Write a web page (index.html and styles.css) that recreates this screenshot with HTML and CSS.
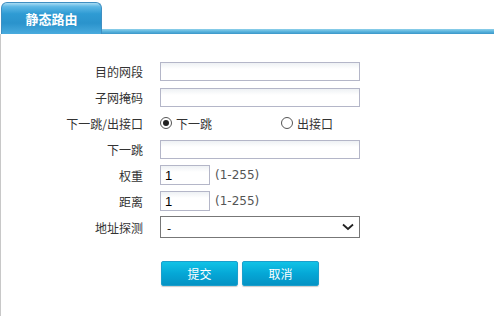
FILE: index.html
```html
<!DOCTYPE html>
<html lang="zh-CN">
<head>
	<meta charset="UTF-8">
	<title>静态路由</title>
	<link rel="stylesheet" href="styles.css">
</head>
<body>
	<div class="head">
		<div class="tab">静态路由</div>
		<div class="line"></div>
	</div>
	<div class="main">
		<div class="form">
			<label class="lbl">目的网段</label>
			<div class="val"><input type="text" class="ipt"></div>

			<label class="lbl">子网掩码</label>
			<div class="val"><input type="text" class="ipt"></div>

			<label class="lbl">下一跳/出接口</label>
			<div class="val radios">
				<span class="rad"><i class="dot on"></i>下一跳</span>
				<span class="rad"><i class="dot"></i>出接口</span>
			</div>

			<label class="lbl">下一跳</label>
			<div class="val"><input type="text" class="ipt"></div>

			<label class="lbl">权重</label>
			<div class="val"><input type="text" class="ipt short" value="1"><span class="tip">(1-255)</span></div>

			<label class="lbl">距离</label>
			<div class="val"><input type="text" class="ipt short" value="1"><span class="tip">(1-255)</span></div>

			<label class="lbl">地址探测</label>
			<div class="val">
				<div class="sel">
					<span>-</span>
					<svg width="12" height="8" viewBox="0 0 12 8"><path d="M1 1.5 L6 6 L11 1.5" fill="none" stroke="#222" stroke-width="1.8"/></svg>
				</div>
			</div>
		</div>
		<div class="btns">
			<a class="btn">提交</a>
			<a class="btn">取消</a>
		</div>
	</div>
</body>
</html>
```
FILE: styles.css
```css
*{
	margin: 0;
	padding: 0;
	box-sizing: border-box;
}
body{
	background: #fff;
	font-family: "Noto Sans CJK SC", "Liberation Sans", sans-serif;
	font-size: 12px;
	color: #333;
	width: 494px;
	height: 316px;
	overflow: hidden;
}
.head{
	display: flex;
	align-items: flex-end;
	height: 34px;
	padding-top: 2px;
}
.tab{
	width: 101px;
	height: 32px;
	margin-left: 1px;
	border: 1px solid #3f8fc2;
	border-bottom: none;
	border-radius: 6px 6px 0 0;
	background: linear-gradient(#a9dcf3 0, #5cb7e5 12%, #2f9bd3 35%, #2a93cc 65%, #49abde 100%);
	color: #fff;
	font-weight: bold;
	font-size: 13px;
	text-align: center;
	line-height: 31px;
}
.line{
	flex: 1;
	height: 5px;
	background: linear-gradient(#8fd0ea, #5ab4dd 50%, #3a96c9);
}
.main{
	border-left: 1px solid #c8c8c8;
	height: 282px;
	padding-top: 24px;
}
.form{
	display: grid;
	grid-template-columns: 142px 1fr;
	grid-auto-rows: 26px;
	column-gap: 17px;
	align-items: center;
}
.lbl{
	text-align: right;
	color: #333;
}
.val{
	display: flex;
	align-items: center;
}
.ipt{
	width: 200px;
	height: 19px;
	border: 1px solid #b4b6c8;
	background: linear-gradient(#eef1f4, #fff 6px);
	font-family: "Liberation Sans", sans-serif;
	font-size: 13px;
	padding-left: 4px;
	color: #000;
	outline: none;
}
.ipt.short{
	width: 50px;
	height: 20px;
}
.tip{
	margin-left: 5px;
	color: #555;
	font-family: "DejaVu Sans", sans-serif;
	font-size: 12px;
}
.radios{
	gap: 0;
}
.rad{
	display: flex;
	align-items: center;
	width: 121px;
}
.dot{
	width: 12px;
	height: 12px;
	border: 1px solid #555;
	border-radius: 50%;
	margin-right: 4px;
	position: relative;
	background: #fff;
}
.dot.on::after{
	content: "";
	position: absolute;
	left: 2px;
	top: 2px;
	width: 6px;
	height: 6px;
	border-radius: 50%;
	background: #222;
}
.sel{
	width: 200px;
	height: 22px;
	border: 1px solid #777;
	display: flex;
	align-items: center;
	justify-content: space-between;
	padding: 0 5px 0 6px;
	color: #000;
	font-size: 12px;
}
.btns{
	display: flex;
	gap: 4px;
	padding-left: 160px;
	margin-top: 21px;
}
.btn{
	display: block;
	width: 77px;
	height: 25px;
	border: 1px solid #1b9fcc;
	border-radius: 2px;
	background: linear-gradient(#11c3e6, #05a7d6 50%, #0593c4);
	color: #fff;
	text-align: center;
	line-height: 23px;
	font-size: 12px;
	box-shadow: 0 1px 1px #ccc;
}
```
